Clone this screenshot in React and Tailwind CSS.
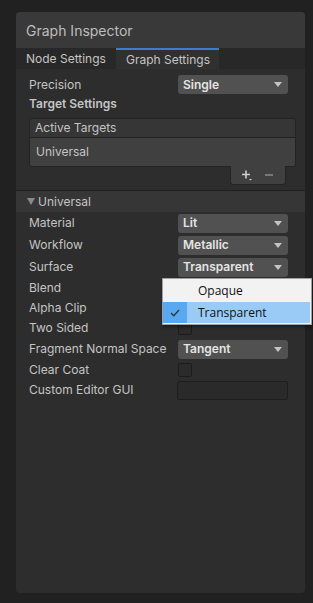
import React from 'react';

const font = { fontFamily: 'Inter, "Noto Sans", sans-serif' };

function Arrow() {
  return (
    <svg width="8" height="5" viewBox="0 0 8 5" className="shrink-0">
      <path d="M0 0 H8 L4 5 Z" fill="#c4c4c4" />
    </svg>
  );
}

function Dropdown({ value }) {
  return (
    <div className="flex h-[19px] w-[110px] items-center justify-between rounded-[3px] bg-[#515151] pl-[5px] pr-[6px] text-[12px] font-semibold text-[#e4e4e4]">
      <span>{value}</span>
      <Arrow />
    </div>
  );
}

function Checkbox() {
  return <div className="h-[14px] w-[14px] rounded-[2px] border border-[#1c1c1c] bg-[#2b2b2b]" />;
}

function TextField() {
  return <div className="h-[19px] w-[111px] rounded-[2px] border border-[#1e1e1e] bg-[#2a2a2a]" />;
}

function Row({ label, height = 'h-[22px]', children }) {
  return (
    <div className={`flex ${height} items-center`}>
      <div className="w-[149px] text-[12px] text-[#c4c4c4]">{label}</div>
      {children}
    </div>
  );
}

export default function App() {
  const rows = [
    { label: 'Material', control: <Dropdown value="Lit" /> },
    { label: 'Workflow', control: <Dropdown value="Metallic" /> },
    { label: 'Surface', control: <Dropdown value="Transparent" /> },
    { label: 'Blend', control: null, h: 'h-[20px]' },
    { label: 'Alpha Clip', control: <Checkbox />, h: 'h-[20px]' },
    { label: 'Two Sided', control: <Checkbox />, h: 'h-[20px]' },
    { label: 'Fragment Normal Space', control: <Dropdown value="Tangent" /> },
    { label: 'Clear Coat', control: <Checkbox />, h: 'h-[20px]' },
    { label: 'Custom Editor GUI', control: <TextField />, h: 'h-[20px]' }
  ];

  return (
    <div className="relative h-[603px] w-[313px] bg-[#212121] pb-[10px] pl-[16px] pr-[8px] pt-[12px]" style={font}>
      <div className="flex h-full flex-col overflow-hidden rounded-[4px] bg-[#2d2d2d]">
        <div className="flex h-[36px] items-center bg-[#393939] pl-[10px] text-[14px] text-[#bdbdbd]">
          Graph Inspector
        </div>

        <div className="flex h-[21px] bg-[#282828] text-[12px] text-[#c4c4c4]">
          <div className="flex w-[100px] items-center pl-[10px]">Node Settings</div>
          <div className="flex w-[103px] items-center border-t-2 border-[#3d7dd1] bg-[#303030] pl-[10px]">
            Graph Settings
          </div>
        </div>

        <div className="pl-[13px] pr-[17px] pt-[6px]">
          <Row label="Precision" height="h-[19px]">
            <Dropdown value="Single" />
          </Row>
          <div className="flex h-[19px] items-center text-[12px] font-semibold text-[#c4c4c4]">Target Settings</div>

          <div className="mr-[-8px] mt-[5px]">
            <div className="overflow-hidden rounded-[3px] border border-[#232323]">
              <div className="flex h-[19px] items-center border-b border-[#232323] bg-[#363636] pl-[5px] text-[12px] text-[#c4c4c4]">
                Active Targets
              </div>
              <div className="flex h-[28px] items-center bg-[#404040] pl-[6px] text-[12px] text-[#c4c4c4]">
                Universal
              </div>
            </div>
            <div className="ml-auto mr-[10px] mt-[-1px] flex h-[19px] w-[56px] items-center gap-[12px] rounded-b-[3px] border border-t-0 border-[#232323] bg-[#404040] pl-[10px]">
              <svg width="12" height="11" viewBox="0 0 12 11">
                <path d="M1 4.5 H9 M5 0.5 V8.5" stroke="#d0d0d0" strokeWidth="1.6" />
                <path d="M8 9 H11 L9.5 10.5 Z" fill="#d0d0d0" />
              </svg>
              <svg width="8" height="4" viewBox="0 0 8 4">
                <path d="M0 2 H8" stroke="#8a8a8a" strokeWidth="1.5" />
              </svg>
            </div>
          </div>
        </div>

        <div className="mt-[5px] border-t border-[#1f1f1f]" />
        <div className="flex h-[21px] items-center bg-[#363636] pl-[11px] text-[12px] text-[#c4c4c4]">
          <svg width="8" height="7" viewBox="0 0 8 7" className="mr-[3px]">
            <path d="M0 0 H8 L4 7 Z" fill="#8a8a8a" />
          </svg>
          Universal
        </div>

        <div className="pl-[13px] pr-[17px]">
          {rows.map((r) => (
            <Row key={r.label} label={r.label} height={r.h}>
              {r.control}
            </Row>
          ))}
        </div>
      </div>

      <div
        className="absolute left-[162px] top-[278px] w-[150px] border border-[#a0a0a0] bg-[#f2f2f2] py-[1px] text-[12px] text-[#111]"
        style={{ fontFamily: '"Open Sans", "Noto Sans", sans-serif', boxShadow: '1px 2px 3px rgba(0,0,0,0.4)' }}
      >
        <div className="flex h-[22px] items-center pl-[35px]">Opaque</div>
        <div className="mr-[1px] flex h-[21px] items-center bg-[#99cbf6]">
          <div className="flex h-full w-[24px] items-center justify-center bg-[#58a9f1]">
            <svg width="10" height="8" viewBox="0 0 10 8">
              <path d="M1 4 L3.8 6.8 L9 1" fill="none" stroke="#333" strokeWidth="1.3" />
            </svg>
          </div>
          <span className="pl-[11px]">Transparent</span>
        </div>
      </div>
    </div>
  );
}
